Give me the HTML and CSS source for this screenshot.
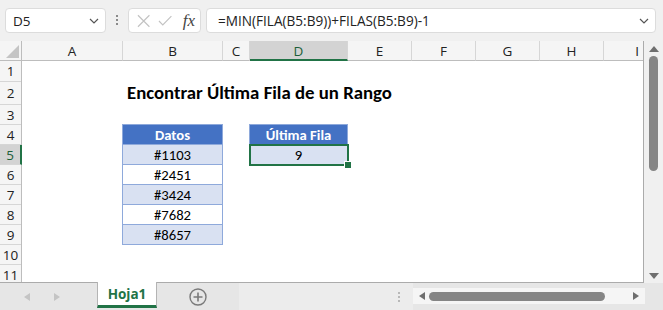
FILE: index.html
```html
<!DOCTYPE html>
<html lang="es">
<head>
    <meta charset="UTF-8">
    <title>Encontrar Última Fila de un Rango</title>
    <link rel="stylesheet" href="styles.css">
</head>
<body>
    <div class="toolbar">
        <div class="namebox">
            <span>D5</span>
            <svg width="10" height="6" viewBox="0 0 10 6"><polyline points="1,1 5,5 9,1" fill="none" stroke="#555" stroke-width="1.2"/></svg>
        </div>
        <div class="dots"><i></i><i></i><i></i></div>
        <div class="fxbox">
            <svg width="14" height="14" viewBox="0 0 14 14"><path d="M1 1 L13 13 M13 1 L1 13" stroke="#c2c2c2" stroke-width="1.2" fill="none"/></svg>
            <svg width="15" height="12" viewBox="0 0 15 12"><polyline points="1,6 5,10 14,1" stroke="#c2c2c2" stroke-width="1.2" fill="none"/></svg>
            <span class="fx">fx</span>
        </div>
        <div class="formula">
            <span>=MIN(FILA(B5:B9))+FILAS(B5:B9)-1</span>
            <svg width="10" height="6" viewBox="0 0 10 6"><polyline points="1,1 5,5 9,1" fill="none" stroke="#555" stroke-width="1.2"/></svg>
        </div>
    </div>

    <div class="main">
        <div class="sheet">
            <div class="corner"><span class="tri"></span></div>
            <div class="ch">A</div>
            <div class="ch">B</div>
            <div class="ch">C</div>
            <div class="ch active">D</div>
            <div class="ch">E</div>
            <div class="ch">F</div>
            <div class="ch">G</div>
            <div class="ch">H</div>
            <div class="ch last">I</div>

            <div class="rows">
                <div class="rh">1</div>
                <div class="rh tall">2</div>
                <div class="rh">3</div>
                <div class="rh">4</div>
                <div class="rh active">5</div>
                <div class="rh">6</div>
                <div class="rh">7</div>
                <div class="rh">8</div>
                <div class="rh">9</div>
                <div class="rh">10</div>
                <div class="rh">11</div>
            </div>

            <div class="cells">
                <div class="title">Encontrar Última Fila de un Rango</div>

                <div class="tcell head b-col r4 first">Datos</div>
                <div class="tcell band b-col r5">#1103</div>
                <div class="tcell b-col r6">#2451</div>
                <div class="tcell band b-col r7">#3424</div>
                <div class="tcell b-col r8">#7682</div>
                <div class="tcell band b-col r9">#8657</div>

                <div class="tcell head d-col r4 first">Última Fila</div>
                <div class="tcell band d-col r5">9</div>

                <div class="selection"><span class="handle"></span></div>
            </div>
        </div>

        <div class="vscroll">
            <span class="arrow up"></span>
            <span class="vthumb"></span>
            <span class="spacer"></span>
            <span class="arrow down"></span>
        </div>
    </div>

    <div class="tabbar">
        <div class="navs">
            <span class="arrow left light"></span>
            <span class="arrow right light"></span>
        </div>
        <div class="tab">Hoja1</div>
        <div class="addsheet">
            <svg width="18" height="18" viewBox="0 0 18 18"><circle cx="9" cy="9" r="8" fill="none" stroke="#7a7a7a" stroke-width="1.4"/><path d="M9 4.5 V13.5 M4.5 9 H13.5" stroke="#7a7a7a" stroke-width="1.6"/></svg>
        </div>
        <div class="split"><i></i><i></i><i></i></div>
        <div class="hscroll">
            <span class="arrow left"></span>
            <span class="hthumb"></span>
            <span class="arrow right"></span>
        </div>
    </div>
</body>
</html>
```

FILE: styles.css
```css
body {
    margin: 0;
    width: 663px;
    height: 310px;
    overflow: hidden;
    background-color: #f0f0f0;
    font-family: "Open Sans", "Noto Sans", sans-serif;
    color: #222;
}

/* formula bar */
.toolbar {
    height: 41px;
    box-sizing: border-box;
    padding: 8px 7px 0 5px;
    display: flex;
    align-items: flex-start;
}
.namebox, .fxbox, .formula {
    height: 25px;
    box-sizing: border-box;
    background-color: #fff;
    border: 1px solid #dcdcdc;
    border-radius: 4px;
    display: flex;
    align-items: center;
}
.namebox {
    width: 101px;
    padding: 0 6px 0 7px;
    justify-content: space-between;
    font-size: 13.5px;
}
.dots {
    width: 22px;
    display: flex;
    flex-direction: column;
    align-items: center;
    gap: 2px;
    padding-top: 7px;
}
.dots i, .split i {
    width: 2px;
    height: 2px;
    background-color: #8a8a8a;
}
.fxbox {
    width: 73px;
    padding: 0 5px 0 8px;
    gap: 8px;
}
.fx {
    font-family: "Liberation Serif", serif;
    font-style: italic;
    font-size: 17px;
    color: #444;
    margin-left: 2px;
}
.formula {
    flex: 1;
    margin-left: 5px;
    padding: 0 6px 0 11px;
    justify-content: space-between;
    font-size: 13.6px;
}

/* sheet */
.main {
    display: flex;
    height: 242px;
}
.sheet {
    width: 643px;
    display: grid;
    grid-template-columns: 22px 101px 100px 27px 98px 64px 64px 64px 64px 1fr;
    grid-template-rows: 20px 1fr;
    border-right: 1px solid #ababab;
    border-bottom: 1px solid #ababab;
    overflow: hidden;
}
.corner, .ch {
    background-color: #f5f5f5;
    border-bottom: 1px solid #bdbdbd;
    box-sizing: border-box;
}
.corner {
    border-right: 1px solid #bdbdbd;
    position: relative;
}
.tri {
    position: absolute;
    right: 2px;
    bottom: 2px;
    border-left: 13px solid transparent;
    border-bottom: 13px solid #c4c4c4;
}
.ch {
    border-right: 1px solid #d6d6d6;
    font-size: 13.5px;
    display: flex;
    align-items: center;
    justify-content: center;
    padding-top: 1px;
}
.ch.last {
    border-right: none;
    justify-content: flex-end;
    padding-right: 4px;
}
.ch.active {
    background-color: #d3d3d3;
    border-bottom: 2px solid #217346;
    color: #1d5f3a;
}
.rows {
    grid-row: 2;
    grid-column: 1;
    background-color: #f5f5f5;
    border-right: 1px solid #bdbdbd;
}
.rh {
    height: 20px;
    box-sizing: border-box;
    border-bottom: 1px solid #d6d6d6;
    font-size: 13.5px;
    display: flex;
    align-items: center;
    justify-content: center;
}
.rh:first-child {
    height: 21px;
}
.rh.tall {
    height: 23px;
}
.rh.active {
    background-color: #d3d3d3;
    border-right: 2px solid #217346;
    margin-right: -1px;
    color: #1d5f3a;
}
.cells {
    grid-row: 2;
    grid-column: 2 / -1;
    background-color: #fff;
    position: relative;
    display: grid;
    grid-template-columns: 101px 100px 27px 98px 64px 64px 64px 64px 1fr;
    grid-template-rows: 21px 23px repeat(9, 20px);
    font-family: Carlito, Lato, sans-serif;
}
.title {
    grid-row: 2;
    grid-column: 2 / span 4;
    align-self: end;
    padding: 0 0 1px 4px;
    white-space: nowrap;
    font-weight: bold;
    font-size: 18.8px;
    color: #000;
}
.tcell {
    box-sizing: border-box;
    border: 1px solid #8ea9db;
    border-top: none;
    margin-left: -1px;
    display: flex;
    align-items: center;
    justify-content: center;
    font-size: 14.7px;
    color: #000;
}
.tcell.first {
    border-top: 1px solid #8ea9db;
    margin-top: -1px;
}
.tcell.head {
    background-color: #4472c4;
    color: #fff;
    font-weight: bold;
}
.tcell.band {
    background-color: #d9e1f2;
}
.b-col { grid-column: 2; }
.d-col { grid-column: 4; }
.r4 { grid-row: 4; }
.r5 { grid-row: 5; }
.r6 { grid-row: 6; }
.r7 { grid-row: 7; }
.r8 { grid-row: 8; }
.r9 { grid-row: 9; }
.selection {
    position: absolute;
    left: 227px;
    top: 83px;
    width: 100px;
    height: 22px;
    box-sizing: border-box;
    border: 2px solid #217346;
}
.handle {
    position: absolute;
    right: -5px;
    bottom: -5px;
    width: 6px;
    height: 6px;
    background-color: #217346;
    border: 1px solid #fff;
}

/* scrollbars */
.vscroll {
    width: 19px;
    display: flex;
    flex-direction: column;
    align-items: center;
    padding: 5px 0 4px;
    box-sizing: border-box;
}
.vthumb {
    width: 9px;
    height: 115px;
    margin-top: 4px;
    border-radius: 5px;
    background-color: #858585;
}
.spacer {
    flex: 1;
}
.arrow {
    width: 0;
    height: 0;
    border: 4px solid transparent;
}
.arrow.up {
    border-top: none;
    border-bottom: 6px solid #6e6e6e;
    border-left-width: 5px;
    border-right-width: 5px;
}
.arrow.down {
    border-bottom: none;
    border-top: 6px solid #6e6e6e;
    border-left-width: 5px;
    border-right-width: 5px;
}
.arrow.left {
    border-left: none;
    border-right: 6px solid #6e6e6e;
}
.arrow.right {
    border-right: none;
    border-left: 6px solid #6e6e6e;
}
.arrow.light.left {
    border-right-color: #c4c4c4;
}
.arrow.light.right {
    border-left-color: #c4c4c4;
}

/* sheet tabs */
.tabbar {
    height: 27px;
    background-color: #e6e6e6;
    display: flex;
    align-items: stretch;
}
.navs {
    width: 97px;
    display: flex;
    align-items: center;
    gap: 24px;
    padding-left: 24px;
    box-sizing: border-box;
}
.tab {
    width: 60px;
    box-sizing: border-box;
    background-color: #fff;
    border-left: 1px solid #b4b4b4;
    border-right: 1px solid #b4b4b4;
    border-bottom: 3px solid #217346;
    margin-bottom: 2px;
    margin-top: -1px;
    display: flex;
    align-items: center;
    justify-content: center;
    font-size: 13.5px;
    font-weight: bold;
    color: #217346;
}
.addsheet {
    width: 82px;
    display: flex;
    align-items: center;
    padding-left: 32px;
    box-sizing: border-box;
}
.split {
    width: 174px;
    display: flex;
    flex-direction: column;
    align-items: flex-end;
    justify-content: center;
    gap: 2px;
    padding-right: 13px;
    box-sizing: border-box;
    background-color: #ececec;
}
.split i {
    background-color: #b8b8b8;
}
.hscroll {
    width: 232px;
    margin: 5px 0 6px;
    background-color: #f5f5f5;
    display: flex;
    align-items: center;
    padding: 0 6px 0 6px;
    box-sizing: border-box;
    gap: 4px;
}
.hthumb {
    width: 176px;
    height: 9px;
    border-radius: 5px;
    background-color: #858585;
    margin-right: auto;
}
```
